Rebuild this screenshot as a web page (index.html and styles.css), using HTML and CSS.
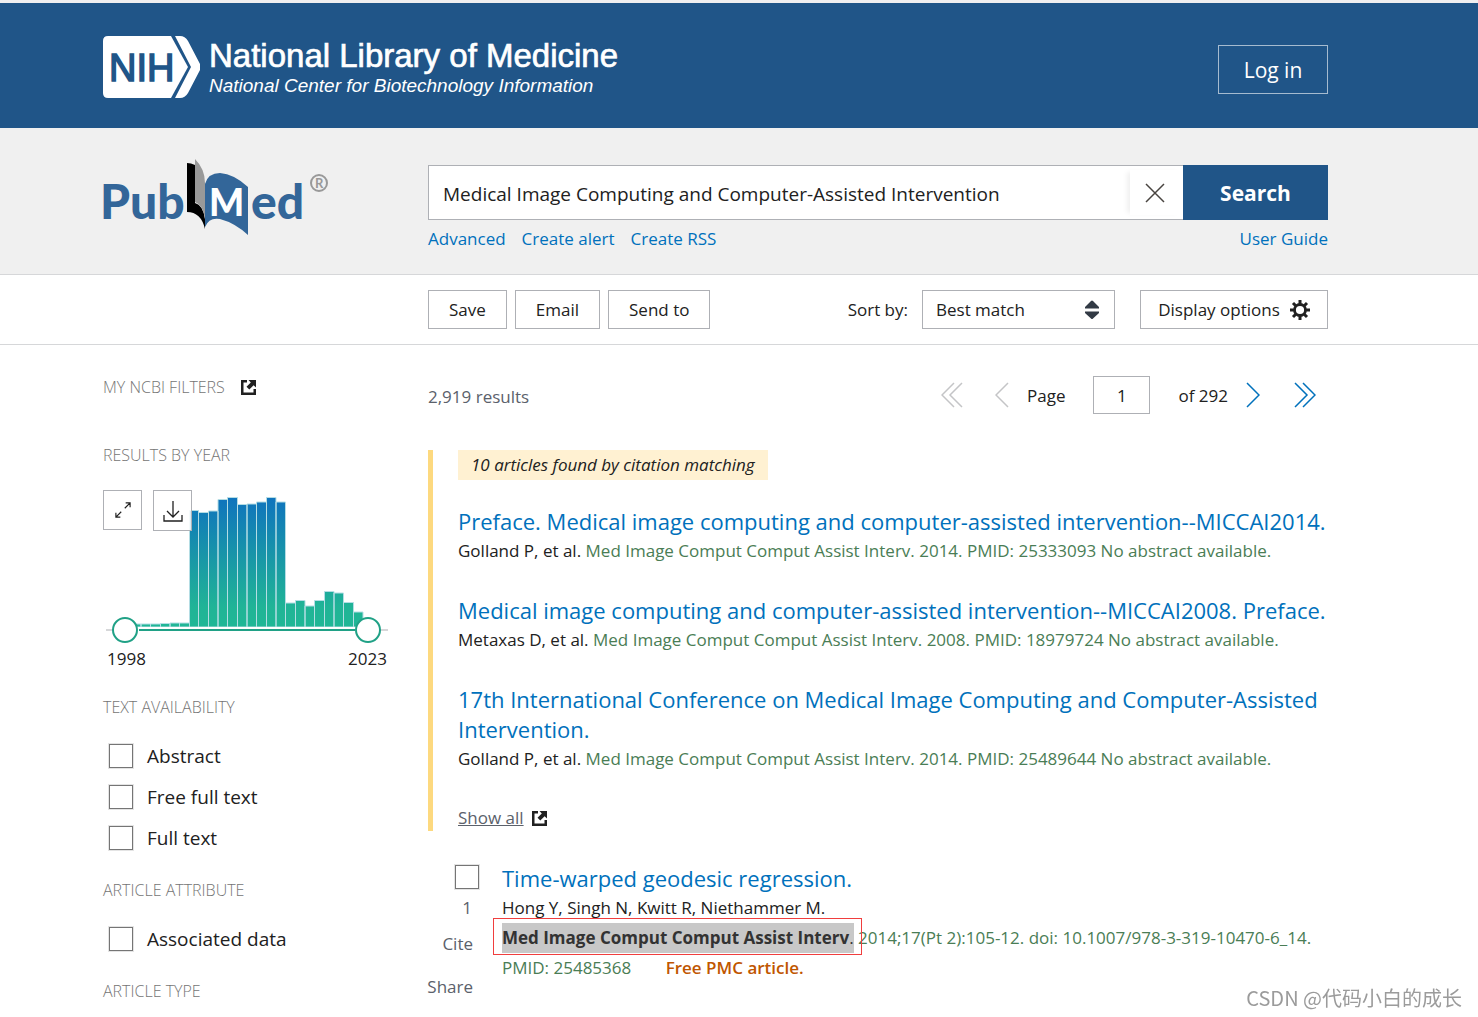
FILE: index.html
```html
<!DOCTYPE html>
<html lang="en">
<head>
<meta charset="utf-8">
<title>Medical Image Computing and Computer-Assisted Intervention - Search Results - PubMed</title>
<link rel="stylesheet" href="styles.css">
</head>
<body>
<svg class="defs" aria-hidden="true">
  <symbol id="external" viewBox="0 0 15 15">
    <path d="M0 0H6V2.500H2.500V12.500H12.500V9H15V15H0Z"/>
    <path d="M7.500 0H15V7.500L12.600 5.200L8.300 9.500L5.500 6.700L9.800 2.400Z"/>
  </symbol>
</svg>

<header class="ncbi-header">
  <div class="wrap ncbi-bar">
    <a class="nih" href="#" aria-label="National Library of Medicine">
      <svg class="nih-badge" width="97" height="62" viewBox="0 0 97 62">
        <path fill="#fff" d="M5 0H68L85 31L68 62H5Q0 62 0 57V5Q0 0 5 0Z"/>
        <path fill="#fff" d="M72 0H77Q82 0 85 5L97 28Q98 31 97 34L85 57Q82 62 77 62H72L88 31Z"/>
        <text class="nih-letters" x="6" y="45">NIH</text>
      </svg>
      <span class="nih-text">
        <span class="nih-name">National Library of Medicine</span>
        <span class="nih-center">National Center for Biotechnology Information</span>
      </span>
    </a>
    <button class="login" type="button">Log in</button>
  </div>
</header>

<section class="search-band">
  <div class="wrap columns">
    <a class="pubmed" href="#" aria-label="PubMed">
      <svg width="236" height="82" viewBox="-8 0 236 82">
        <text class="pm-word" x="-3" y="64">Pub</text>
        <path fill="#000" d="M84 8Q88 8 92 10V48Q100 50 102 64V74Q98 57 84 57Z"/>
        <path fill="#999" d="M92 4Q102 14 102 28V64Q100 50 92 47Z"/>
        <path fill="#336699" d="M102 29Q105 18 117 18Q131 19 145 32V80Q132 68 117 64Q106 62 102 72Z"/>
        <text class="pm-m" x="106" y="61">M</text>
        <text class="pm-word" x="148" y="64">ed</text>
        <circle cx="216" cy="28" r="8" fill="none" stroke="#999" stroke-width="2"/>
        <text class="pm-reg" x="212" y="33">R</text>
      </svg>
    </a>
    <form class="search">
      <div class="search-row">
        <div class="search-field">
          <input class="search-input" type="text" aria-label="Search term" value="Medical Image Computing and Computer-Assisted Intervention">
          <button class="clear" type="button" aria-label="Clear search">
            <svg width="20" height="20" viewBox="0 0 20 20"><path d="M1 1L19 19M19 1L1 19"/></svg>
          </button>
        </div>
        <button class="search-btn" type="submit">Search</button>
      </div>
      <nav class="search-links">
        <a href="#">Advanced</a>
        <a href="#">Create alert</a>
        <a href="#">Create RSS</a>
        <a class="guide" href="#">User Guide</a>
      </nav>
    </form>
  </div>
</section>

<section class="toolbar">
  <div class="wrap columns">
    <div class="tools">
      <button class="tool" type="button">Save</button>
      <button class="tool" type="button">Email</button>
      <button class="tool" type="button">Send to</button>
      <label class="sort-label" for="sort">Sort by:</label>
      <div class="sort">
        <select id="sort"><option>Best match</option><option>Most recent</option></select>
        <svg class="sort-arrows" width="14" height="20" viewBox="0 0 14 20"><path d="M0 8.500V7L6 1Q7 0 8 1L14 7V8.500ZM0 11.500V13L6 18.500Q7 19.500 8 18.500L14 13V11.500Z"/></svg>
      </div>
      <button class="tool display" type="button">Display options
        <svg width="20" height="20" viewBox="-10 -10 20 20">
          <circle r="5.500" fill="none" stroke="#212121" stroke-width="2.800"/>
          <path stroke="#212121" stroke-width="3" d="M0 -10V-6M0 6V10M-10 0H-6M6 0H10M-7 -7L-4.500 -4.500M7 7L4.500 4.500M-7 7L-4.500 4.500M7 -7L4.500 -4.500"/>
        </svg>
      </button>
    </div>
  </div>
</section>

<div class="wrap columns content">
  <aside class="filters">
    <h3 class="heading ncbi-filters">MY NCBI FILTERS <svg width="15" height="15"><use href="#external"/></svg></h3>
    <h3 class="heading">RESULTS BY YEAR</h3>
    <div class="timeline">
      <svg class="bars" width="288" height="138" viewBox="0 0 288 138">
        <defs>
          <linearGradient id="depth" gradientUnits="userSpaceOnUse" x1="0" y1="7" x2="0" y2="137">
            <stop offset="0" stop-color="#0f73bd"/><stop offset=".85" stop-color="#20b496"/><stop offset="1" stop-color="#20b796"/>
          </linearGradient>
        </defs>
        <path fill="url(#depth)" stroke="#b4dde4" stroke-width="1" d="M28.500 137V134H38V137ZM38 137V134H47.500V137ZM47.500 137V134H57.500V137ZM57.500 137V133.500H67V137ZM67 137V133H76.500V137ZM76.500 137V133H86.500V137ZM86.500 137V20.500H95.500V137ZM95.500 137V22.500H105.500V137ZM105.500 137V21H115V137ZM115 137V9.500H124.500V137ZM124.500 137V7.500H134.500V137ZM134.500 137V14.500H144V137ZM144 137V14H153.500V137ZM153.500 137V12H163.500V137ZM163.500 137V7.500H173V137ZM173 137V12H182.500V137ZM182.500 137V113H192.500V137ZM192.500 137V110.500H202V137ZM202 137V116H211.500V137ZM211.500 137V110.500H221.500V137ZM221.500 137V101.500H231V137ZM231 137V103H240.500V137ZM240.500 137V112.500H250.500V137ZM250.500 137V122H260V137Z"/>
      </svg>
      <div class="chart-actions">
        <button type="button" aria-label="Expand chart"><svg width="16" height="16" viewBox="0 0 18 18"><path d="M11 7L17 1M12 1H17V6M7 11L1 17M1 12V17H6"/></svg></button>
        <button class="download" type="button" aria-label="Download CSV"><svg width="20" height="22" viewBox="0 0 20 22"><path d="M10 1V17M4 11L10 17L16 11M1 15V21H19V15"/></svg></button>
      </div>
      <div class="slider">
        <input type="range" min="1998" max="2023" value="1998" aria-label="From year">
        <input type="range" min="1998" max="2023" value="2023" aria-label="To year">
      </div>
      <div class="years"><span>1998</span><span>2023</span></div>
    </div>
    <h3 class="heading">TEXT AVAILABILITY</h3>
    <div class="options">
      <label><input class="box" type="checkbox"> Abstract</label>
      <label><input class="box" type="checkbox"> Free full text</label>
      <label><input class="box" type="checkbox"> Full text</label>
    </div>
    <h3 class="heading">ARTICLE ATTRIBUTE</h3>
    <div class="options">
      <label><input class="box" type="checkbox"> Associated data</label>
    </div>
    <h3 class="heading">ARTICLE TYPE</h3>
  </aside>

  <main class="results">
    <div class="results-top">
      <span class="amount">2,919 results</span>
      <nav class="pager">
        <button class="first" type="button" disabled aria-label="First page"><svg width="22" height="26" viewBox="0 0 22 26"><path d="M13 1L1 13L13 25M21 1L9 13L21 25"/></svg></button>
        <button class="prev" type="button" disabled aria-label="Previous page"><svg width="14" height="26" viewBox="0 0 14 26"><path d="M13 1L1 13L13 25"/></svg></button>
        <label for="page">Page</label>
        <input id="page" type="text" value="1">
        <span class="of">of 292</span>
        <button class="next" type="button" aria-label="Next page"><svg width="14" height="26" viewBox="0 0 14 26"><path d="M1 1L13 13L1 25"/></svg></button>
        <button class="last" type="button" aria-label="Last page"><svg width="22" height="26" viewBox="0 0 22 26"><path d="M1 1L13 13L1 25M9 1L21 13L9 25"/></svg></button>
      </nav>
    </div>

    <section class="citations">
      <em class="found">10 articles found by citation matching</em>
      <article>
        <a class="title" href="#">Preface. Medical image computing and computer-assisted intervention--MICCAI2014.</a>
        <p>Golland P, et al. <span class="cit">Med Image Comput Comput Assist Interv. 2014. PMID: 25333093 No abstract available.</span></p>
      </article>
      <article>
        <a class="title" href="#">Medical image computing and computer-assisted intervention--MICCAI2008. Preface.</a>
        <p>Metaxas D, et al. <span class="cit">Med Image Comput Comput Assist Interv. 2008. PMID: 18979724 No abstract available.</span></p>
      </article>
      <article>
        <a class="title" href="#">17th International Conference on Medical Image Computing and Computer-Assisted Intervention.</a>
        <p>Golland P, et al. <span class="cit">Med Image Comput Comput Assist Interv. 2014. PMID: 25489644 No abstract available.</span></p>
      </article>
      <div class="show-all"><a href="#">Show all</a> <svg width="15" height="15"><use href="#external"/></svg></div>
    </section>

    <article class="result">
      <div class="side">
        <input class="box" type="checkbox" aria-label="Select article 1">
        <span class="number">1</span>
        <button type="button">Cite</button>
        <button type="button">Share</button>
      </div>
      <div class="docsum">
        <a class="title" href="#">Time-warped geodesic regression.</a>
        <p>Hong Y, Singh N, Kwitt R, Niethammer M.</p>
        <p class="cit"><span class="marked"><mark><b>Med Image Comput Comput Assist Interv</b>.</mark></span> 2014;17(Pt 2):105-12. doi: 10.1007/978-3-319-10470-6_14.</p>
        <p class="cit">PMID: 25485368 <b class="free">Free PMC article.</b></p>
      </div>
    </article>
  </main>
</div>
<div class="watermark">CSDN @代码小白的成长</div>
</body>
</html>
```
FILE: styles.css
```css
* { box-sizing: border-box; }
body {
  margin: 0;
  border-top: 3px solid #f0eff0;
  background: #fff;
  color: #212121;
  font: 17px/30px "Open Sans", "Noto Sans", sans-serif;
}
h3, p { margin: 0; font-weight: 400; }
a { color: #0071bc; text-decoration: none; }
button, input, select { font: inherit; color: inherit; margin: 0; padding: 0; border-radius: 0; }
button { background: none; border: 0; white-space: nowrap; }
svg { display: block; flex: none; }
.defs { position: absolute; width: 0; height: 0; }
.wrap { padding: 0 150px 0 103px; }
.columns { display: grid; grid-template-columns: 325px minmax(0, 1fr); }

/* NCBI header */
.ncbi-header { background: #205588; }
.ncbi-bar { display: flex; justify-content: space-between; align-items: center; min-height: 125px; padding-top: 3px; }
.nih { display: flex; gap: 9px; color: #fff; font-family: "Liberation Sans", Arial, sans-serif; }
.nih-letters { font: 38px "Liberation Sans", Arial, sans-serif; fill: #205588; stroke: #205588; stroke-width: 1.5; }
.nih-text { display: flex; flex-direction: column; white-space: nowrap; }
.nih-name { font-size: 33px; line-height: 40px; -webkit-text-stroke: thin #fff; }
.nih-center { font-size: 19px; line-height: 20px; font-style: italic; }
.login { width: 110px; height: 49px; margin-top: 4px; padding-top: 2px; border: 1px solid #a6bbcf; color: #fff; font-size: 21px; }

/* search */
.search-band { background: #f0f0f0; border-bottom: 1px solid #d6d7d9; padding: 27px 0 20px; }
.pubmed { margin-left: -8px; }
.pm-word { font: 900 48px Lato, sans-serif; fill: #336699; }
.pm-m { font: 900 37px Lato, sans-serif; fill: #fff; }
.pm-reg { font: bold 13px Lato, sans-serif; fill: #999; }
.search { padding-top: 10px; }
.search-row { display: flex; height: 55px; }
.search-field { display: flex; flex: 1; border: 1px solid #aeb0b5; border-right: 0; background: #fff; }
.search-input { flex: 1; min-width: 0; border: 0; background: none; padding: 2px 14px 0; font-size: 19px; outline: 0; }
.clear { display: grid; place-items: center; width: 53px; margin: 4px 0; padding-right: 4px; box-shadow: -5px 0 5px -2px #f0f0f0; }
.clear svg { fill: none; stroke: #494440; stroke-width: 1.5; }
.search-btn { width: 145px; background: #205588; color: #fff; font-size: 21px; font-weight: 700; }
.search-links { display: flex; gap: 16px; padding-top: 4px; }
.guide { margin-left: auto; }

/* toolbar */
.toolbar { border-bottom: 1px solid #d6d7d9; padding: 15px 0; }
.tools { grid-column: 2; display: flex; align-items: center; }
.tool { height: 39px; padding: 0 20px; border: 1px solid #aeb0b5; margin-right: 8px; }
.sort-label { margin-left: auto; }
.sort { position: relative; width: 193px; margin: 0 25px 0 14px; }
.sort select { display: block; width: 100%; height: 39px; padding: 0 13px; border: 1px solid #aeb0b5; background: #fff; appearance: none; }
.sort-arrows { position: absolute; right: 16px; top: 10px; fill: #323a45; pointer-events: none; }
.display { display: flex; align-items: center; justify-content: center; gap: 10px; width: 188px; padding: 0; margin-right: 0; }

/* filters */
.content { padding-top: 30px; }
.heading { display: flex; align-items: center; color: #757575; font-size: 16px; line-height: 24px; font-weight: 300; }
.ncbi-filters { gap: 16px; margin-bottom: 44px; }
.ncbi-filters svg, .show-all svg { fill: #212121; }
.timeline { position: relative; width: 288px; margin: 23px 0; }
.chart-actions { position: absolute; left: 0; top: 0; display: flex; align-items: flex-start; gap: 11px; }
.chart-actions button { display: grid; place-items: center; width: 39px; height: 40px; border: 1px solid #aeb0b5; background: rgba(255, 255, 255, .85); }
.chart-actions .download { height: 41px; }
.chart-actions svg { fill: none; stroke: #212121; stroke-width: 1.3; }
.slider {
  display: grid;
  height: 26px;
  margin-top: -11px;
  padding: 0 10px 0 9px;
  background:
    linear-gradient(#20a186, #20a186) 36px 12px / 216px 2px no-repeat,
    linear-gradient(#fff, #fff) 20px 10px / 246px 6px no-repeat,
    linear-gradient(#d6d7d9, #d6d7d9) 3px 12px / 282px 2px no-repeat;
  position: relative;
}
.slider input { grid-area: 1 / 1; appearance: none; width: 100%; height: 26px; background: none; pointer-events: none; }
.slider input::-webkit-slider-thumb { appearance: none; width: 26px; height: 26px; border: 2px solid #20a186; border-radius: 50%; background: #fff; pointer-events: auto; }
.years { display: flex; justify-content: space-between; padding: 3px 4px 0; line-height: 26px; }
.options { padding: 16px 0 20px 6px; }
.options label { display: flex; align-items: center; gap: 14px; height: 41px; font-size: 19px; }
.box { appearance: none; flex: none; width: 24px; height: 24px; border: 1px solid #757575; box-shadow: 0 0 0 1px #e4e4e4; background: #fff; }

/* results */
.results-top { display: flex; align-items: center; justify-content: space-between; height: 40px; margin-bottom: 35px; }
.amount { color: #5b616b; padding-top: 4px; }
.pager { display: flex; align-items: center; padding-right: 12px; }
.pager label, .of { padding-top: 2px; }
.pager svg { fill: none; stroke: #0071bc; stroke-width: 1.5; }
.pager button:disabled svg { stroke: #c4c5c7; }
.prev { margin: 0 18px 0 32px; }
.pager input { width: 57px; height: 38px; margin: 0 28px; border: 1px solid #aeb0b5; text-align: center; }
.next { margin: 0 34px 0 18px; }
.citations { border-left: 5px solid #fdd97f; padding-left: 25px; }
.found { display: inline-block; margin-bottom: 26px; padding: 0 13px; background: #fff1d2; vertical-align: top; }
.citations article { margin-bottom: 29px; }
.title { display: block; font-size: 22px; line-height: 30px; }
.cit { color: #4a7d55; }
.show-all { display: flex; align-items: center; gap: 8px; padding-top: 2px; line-height: 26px; }
.show-all a { color: #5b616b; text-decoration: underline; }
.result { display: grid; grid-template-columns: 45px minmax(0, 1fr); gap: 29px; padding-top: 32px; }
.side { display: flex; flex-direction: column; align-items: flex-end; color: #5b616b; padding-top: 2px; margin-right: -6px; }
.number { width: 24px; text-align: center; padding: 4px 0 6px; }
.side button { margin-bottom: 13px; padding-right: 6px; }
.marked { position: relative; }
.marked::after { content: ""; position: absolute; inset: -8px -8px -6px -9px; border: 1px solid #f03e3e; pointer-events: none; }
mark { display: inline-block; background: #c8c8c8; color: #333; }
.free { margin-left: 30px; color: #c05600; font-weight: 600; }
.watermark { position: fixed; right: 16px; bottom: 4px; color: #9b9b9b; font: 20px/30px "Noto Sans CJK SC", sans-serif; }
```
